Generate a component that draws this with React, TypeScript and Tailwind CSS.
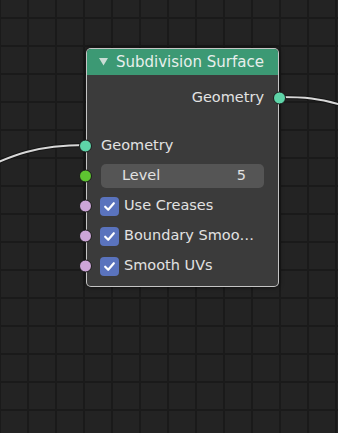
import React from 'react';

type SocketProps = { color: string; side?: 'left' | 'right' };

const Socket: React.FC<SocketProps> = ({ color, side = 'left' }) => (
  <span
    className={`absolute top-1/2 -translate-y-1/2 w-[13px] h-[13px] rounded-full border border-[#1b1b1b] ${
      side === 'left' ? '-left-[8px]' : '-right-[8px]'
    }`}
    style={{ backgroundColor: color }}
  />
);

const Check: React.FC<{ label: string }> = ({ label }) => (
  <div className="relative h-[30px] flex items-center pl-[13px] gap-[5px]">
    <Socket color="#cda6d8" />
    <span className="w-[19px] h-[19px] rounded-[4px] bg-[#5a73bd] flex items-center justify-center">
      <svg width="13" height="13" viewBox="0 0 12 12">
        <path d="M2 6.2 L4.8 9 L10 3" fill="none" stroke="#ffffff" strokeWidth="2" strokeLinecap="round" strokeLinejoin="round" />
      </svg>
    </span>
    <span className="text-[14.5px] text-[#e2e2e2] whitespace-nowrap">{label}</span>
  </div>
);

export default function App() {
  return (
    <div
      className="relative w-[338px] h-[433px] overflow-hidden bg-[#232323] font-['DejaVu_Sans',sans-serif]
        bg-[linear-gradient(to_right,#1a1a1a_2px,transparent_2px),linear-gradient(to_bottom,#1a1a1a_2px,transparent_2px)]
        bg-[size:28px_28px] bg-[position:27px_17px]"
    >
      {/* wires */}
      <svg className="absolute inset-0" width="338" height="433">
        <path d="M279 97 C 305 97, 318 98, 345 106" fill="none" stroke="#151515" strokeWidth="4" />
        <path d="M279 97 C 305 97, 318 98, 345 106" fill="none" stroke="#d8d8d8" strokeWidth="2" />
        <path d="M-40 180 C 15 152, 40 145, 86 145" fill="none" stroke="#151515" strokeWidth="4" />
        <path d="M-40 180 C 15 152, 40 145, 86 145" fill="none" stroke="#d8d8d8" strokeWidth="2" />
      </svg>

      {/* node */}
      <div className="absolute left-[86px] top-[48px] w-[193px] h-[239px] rounded-[5px] border border-white/70 bg-[#3d3d3d]/95 shadow-[0_0_5px_rgba(0,0,0,0.7)] flex flex-col">
        <div className="h-[26px] bg-[#3c9974] rounded-t-[4px] flex items-center pl-[12px] gap-[8px]">
          <svg width="9" height="8" viewBox="0 0 9 8">
            <polygon points="0,0 9,0 4.5,7.5" fill="#c9dcd4" />
          </svg>
          <span className="text-[15px] text-[#e8efec] whitespace-nowrap">Subdivision Surface</span>
        </div>

        <div className="relative h-[30px] mt-[8px] flex items-center justify-end pr-[14px]">
          <span className="text-[14.5px] text-[#e2e2e2]">Geometry</span>
          <Socket color="#5ed4a8" side="right" />
        </div>

        <div className="relative h-[30px] mt-[18px] flex items-center pl-[14px]">
          <Socket color="#5ed4a8" />
          <span className="text-[14.5px] text-[#e2e2e2]">Geometry</span>
        </div>

        <div className="relative h-[30px] flex items-center pl-[14px] pr-[14px]">
          <Socket color="#5ec431" />
          <div className="flex-1 h-[24px] rounded-[5px] bg-[#555555] flex items-center justify-between pl-[21px] pr-[18px]">
            <span className="text-[14.5px] text-[#e2e2e2]">Level</span>
            <span className="text-[14.5px] text-[#e2e2e2]">5</span>
          </div>
        </div>

        <Check label="Use Creases" />
        <Check label="Boundary Smoo…" />
        <Check label="Smooth UVs" />
      </div>
    </div>
  );
}
